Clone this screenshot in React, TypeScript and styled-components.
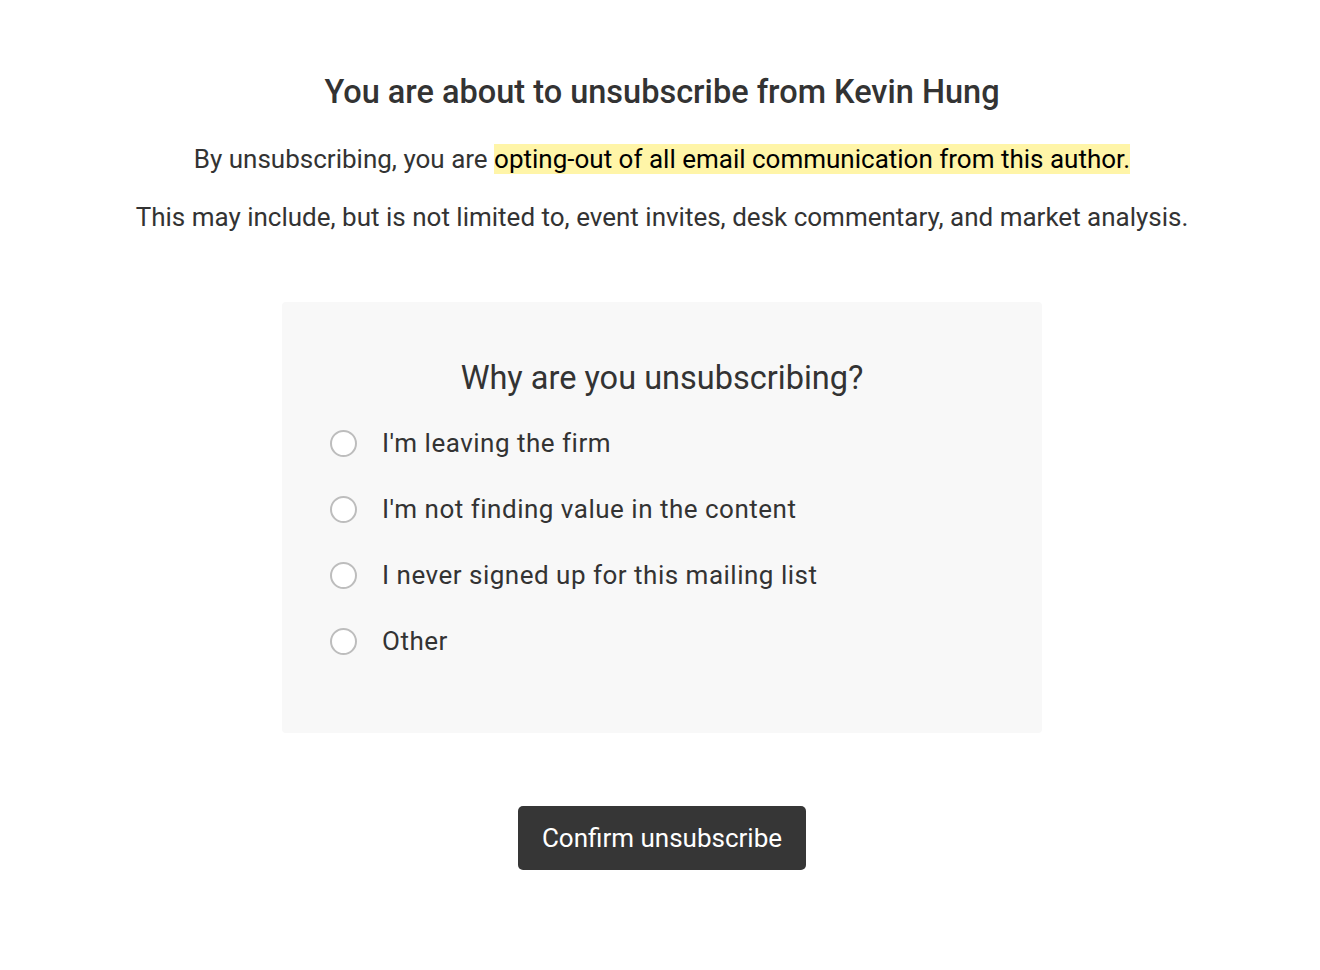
import React, { useState } from 'react'
import styled, { createGlobalStyle } from 'styled-components'

const GlobalStyle = createGlobalStyle`
    body {
        margin: 0;
        background: #fff;
        font-family: Roboto, 'Liberation Sans', sans-serif;
        color: #333;
    }
`

const Page = styled.main`
    display: flex;
    flex-direction: column;
    align-items: center;
    padding: 72px 0 0 4px;
`

const Title = styled.h1`
    margin: 0;
    font-size: 32.5px;
    font-weight: 500;
    line-height: 40px;
    color: #333;
`

const Lead = styled.p`
    margin: 0;
    font-size: 26px;
    line-height: 32px;
    color: #333;
    text-align: center;
`

const FirstLead = styled(Lead)`
    margin-top: 31px;
`

const SecondLead = styled(Lead)`
    margin-top: 26px;
`

const Highlight = styled.span`
    background: #fff5a8;
    color: #000;
`

const Card = styled.section`
    box-sizing: border-box;
    width: 760px;
    height: 431px;
    margin-top: 69px;
    background: #f8f8f8;
    border-radius: 4px;
    padding: 56px 48px 0 48px;
`

const Question = styled.h2`
    margin: 0 0 12px 0;
    text-align: center;
    font-size: 32.5px;
    font-weight: 400;
    line-height: 40px;
    color: #333;
`

const OptionList = styled.div`
    display: flex;
    flex-direction: column;
`

const Option = styled.label`
    display: flex;
    align-items: center;
    gap: 25px;
    height: 66px;
    font-size: 26px;
    letter-spacing: 0.5px;
    color: #333;
    cursor: pointer;
`

const Radio = styled.span<{ checked: boolean }>`
    box-sizing: border-box;
    width: 27px;
    height: 27px;
    border-radius: 50%;
    border: 2px solid #bdbdbd;
    background: #fff;
    display: flex;
    align-items: center;
    justify-content: center;
    &::after {
        content: '';
        width: 13px;
        height: 13px;
        border-radius: 50%;
        background: ${props => props.checked ? '#363636' : 'transparent'};
    }
`

const ConfirmButton = styled.button`
    margin-top: 73px;
    width: 288px;
    height: 64px;
    border: none;
    border-radius: 5px;
    background: #363636;
    color: #fff;
    font-family: Roboto, 'Liberation Sans', sans-serif;
    font-size: 26px;
    cursor: pointer;
`

const reasons = [
    "I'm leaving the firm",
    "I'm not finding value in the content",
    'I never signed up for this mailing list',
    'Other',
]

export default function App() {
    const [selected, setSelected] = useState<number | null>(null)

    return <React.Fragment>
        <GlobalStyle />
        <Page>
            <Title>You are about to unsubscribe from Kevin Hung</Title>
            <FirstLead>
                By unsubscribing, you are <Highlight>opting-out of all email communication from this author.</Highlight>
            </FirstLead>
            <SecondLead>This may include, but is not limited to, event invites, desk commentary, and market analysis.</SecondLead>
            <Card>
                <Question>Why are you unsubscribing?</Question>
                <OptionList>
                    {reasons.map((reason, idx) => (
                        <Option key={reason} onClick={() => setSelected(idx)}>
                            <Radio checked={selected === idx} />
                            {reason}
                        </Option>
                    ))}
                </OptionList>
            </Card>
            <ConfirmButton>Confirm unsubscribe</ConfirmButton>
        </Page>
    </React.Fragment>
}
